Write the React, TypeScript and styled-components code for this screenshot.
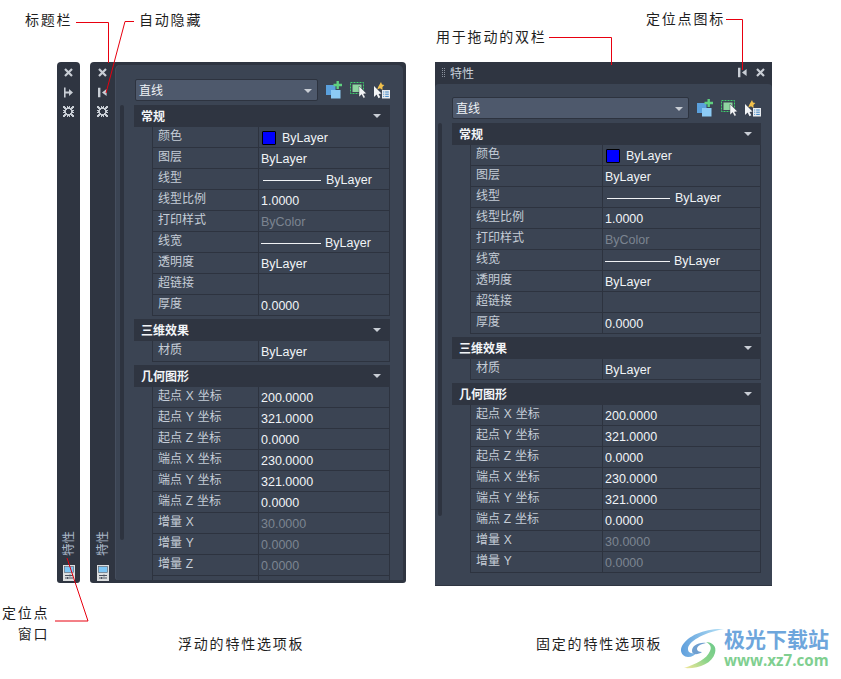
import React from "react";
import styled, { createGlobalStyle } from "styled-components";

const Global = createGlobalStyle`
  html, body { margin: 0; padding: 0; background: #fff; }
  body { font-family: "Liberation Sans", "Noto Sans CJK SC", sans-serif; }
`;

const CJK = `"Liberation Sans", "Noto Sans CJK SC", sans-serif`;

const Stage = styled.div`
  position: relative;
  width: 841px;
  height: 679px;
  overflow: hidden;
  box-sizing: border-box;
  padding: 62px 0 0 57px;
  display: flex;
  align-items: flex-start;
`;

const Dock = styled.div<{ $w: number; $mr: number }>`
  width: ${(p) => p.$w}px;
  height: 521px;
  margin-right: ${(p) => p.$mr}px;
  flex: none;
  background: #2f3541;
  border-radius: 4px 4px 3px 3px;
  display: flex;
  color: #cfd6df;
`;

const SideBar = styled.div<{ $w: number }>`
  width: ${(p) => p.$w}px;
  flex: none;
  display: flex;
  flex-direction: column;
  align-items: center;
  padding: 1px 0 2px;
  box-sizing: border-box;
`;

const SideIcon = styled.div`
  height: 19.5px;
  display: flex;
  align-items: center;
  justify-content: center;
`;

const SideLabel = styled.div`
  margin-top: auto;
  margin-bottom: 9px;
  writing-mode: vertical-rl;
  text-orientation: sideways;
  transform: rotate(180deg);
  font: 12.5px/14px ${CJK};
  color: #aab8c9;
`;

const Content = styled.div`
  flex: 1;
  margin: 3px 3px 3px 0;
  background: #3b4453;
  border-radius: 5px 5px 0 3px;
  box-shadow: inset 1px 0 0 #454e5e;
  padding: 14px 0 0;
  overflow: hidden;
  box-sizing: border-box;
`;

const ComboRow = styled.div<{ $pl: number }>`
  display: flex;
  align-items: center;
  padding-left: ${(p) => p.$pl}px;
  height: 22px;
`;

const Combo = styled.div<{ $w: number }>`
  width: ${(p) => p.$w}px;
  height: 22px;
  box-sizing: border-box;
  background: #4e596c;
  border: 1px solid #2d333f;
  border-radius: 2px;
  display: flex;
  align-items: center;
  justify-content: space-between;
  padding: 0 5px 1px 3px;
  font: 12px ${CJK};
  color: #eef2f6;
  flex: none;
`;

const DownArrow = styled.span`
  width: 0;
  height: 0;
  border-left: 4px solid transparent;
  border-right: 4px solid transparent;
  border-top: 4px solid #c9ced5;
  margin-top: 2px;
`;

const ToolIcons = styled.div`
  display: flex;
  align-items: center;
  gap: 6px;
  margin-left: 7px;
`;

const Body = styled.div<{ $pl: number; $gap: number }>`
  display: flex;
  align-items: flex-start;
  padding-left: ${(p) => p.$pl}px;
  gap: ${(p) => p.$gap}px;
  margin-top: 4px;
`;

const ScrollStrip = styled.div<{ $h: number }>`
  width: 4px;
  height: ${(p) => p.$h}px;
  background: #2d333f;
  border-radius: 2px;
  flex: none;
`;

const List = styled.div<{ $w: number }>`
  width: ${(p) => p.$w}px;
  flex: none;
`;

const SectionHead = styled.div`
  height: 22px;
  background: #2f3541;
  display: flex;
  align-items: center;
  justify-content: space-between;
  padding: 0 9px 2px 7px;
  box-sizing: border-box;
  font: bold 12px ${CJK};
  color: #f2f4f7;
`;

const SectionBlock = styled.div`
  margin-bottom: 3px;
`;

const Rows = styled.div`
  margin-left: 18px;
`;

const Row = styled.div<{ $label: number }>`
  display: grid;
  grid-template-columns: ${(p) => p.$label}px 1fr;
  height: 21px;
  box-sizing: border-box;
  border: solid #2d333f;
  border-width: 0 1px 1px 1px;
`;

const Label = styled.div`
  padding-left: 5px;
  font: 12px/19.5px ${CJK};
  word-spacing: 0.5px;
  color: #c5cdd7;
  white-space: nowrap;
`;

const Value = styled.div<{ $dim?: boolean }>`
  border-left: 1px solid #2d333f;
  padding: 1px 0 0 2px;
  font: 12.5px/20px ${CJK};
  color: ${(p) => (p.$dim ? "#7c8491" : "#f1f4f7")};
  display: flex;
  align-items: center;
  white-space: nowrap;
`;

const Swatch = styled.span`
  width: 12px;
  height: 12px;
  background: #0000ff;
  border: 1px solid #000;
  border-radius: 1px;
  margin: -1px 6px 0 1px;
  flex: none;
`;

const LineSample = styled.span<{ $w: number; $ml: number; $mr: number }>`
  width: ${(p) => p.$w}px;
  height: 1px;
  background: #f0f2f5;
  margin: 0 ${(p) => p.$mr}px 0 ${(p) => p.$ml}px;
  flex: none;
`;

const Docked = styled.div`
  width: 337px;
  height: 524px;
  flex: none;
  background: #2f3541;
  display: flex;
  flex-direction: column;
`;

const TitleBar = styled.div`
  height: 22px;
  display: flex;
  align-items: center;
  padding: 0 6px 2px 6px;
  box-sizing: border-box;
  font: 12px ${CJK};
  color: #c9d1db;
  flex: none;
`;

const Grip = styled.span`
  width: 4px;
  height: 9px;
  margin-right: 5px;
  background: repeating-conic-gradient(#8b929d 0 25%, transparent 0 100%) 0 0 / 2px 2px;
`;

const TitleIcons = styled.div`
  margin-left: auto;
  display: flex;
  align-items: center;
  gap: 7px;
`;

const DockedContent = styled.div`
  flex: 1;
  padding-top: 13px;
  overflow: hidden;
  background: #3b4453;
  border-radius: 4px 4px 0 0;
  border-bottom: 1px solid #2f3541;
`;

const Note = styled.div<{ $x: number; $y: number; $right?: boolean }>`
  position: absolute;
  left: ${(p) => p.$x}px;
  top: ${(p) => p.$y}px;
  font: 14px/21px ${CJK};
  color: #1f1f1f;
  letter-spacing: 1.8px;
  white-space: nowrap;
  text-align: ${(p) => (p.$right ? "right" : "left")};
`;

const Leaders = styled.svg`
  position: absolute;
  left: 0;
  top: 0;
  pointer-events: none;
`;

const Logo = styled.div`
  position: absolute;
  left: 680px;
  top: 627px;
  display: flex;
  align-items: flex-start;
`;

const LogoText = styled.div`
  display: flex;
  flex-direction: column;
`;

const LogoName = styled.div`
  font: bold 21px/25px ${CJK};
  color: #6ea6dc;
  white-space: nowrap;
`;

const LogoUrl = styled.div`
  font: bold 15.2px/17px "Open Sans", "Liberation Sans", sans-serif;
  color: #80cf90;
  white-space: nowrap;
`;

const CloseIcon = () => (
  <svg width="11" height="11" viewBox="0 0 11 11">
    <path d="M2 2l7 7M9 2l-7 7" stroke="#c9ced5" strokeWidth="2.2" fill="none" />
  </svg>
);

const PinIcon = () => (
  <svg width="11" height="11" viewBox="0 0 11 11">
    <path d="M1 .8h2.4v9.4H1zM5 5.5L9.6 2v7z" fill="#c9ced5" />
  </svg>
);

const UnpinIcon = () => (
  <svg width="11" height="11" viewBox="0 0 11 11">
    <path d="M1 .5h1.6v10H1zM2.6 4.5H6V2l4 3.5L6 9V6.5H2.6z" fill="#c9ced5" />
  </svg>
);

const gearBits = [
  "XX..X.X..XX",
  "XXX.XXX.XXX",
  ".XXXXXXXXX.",
  "..XX...XX..",
  "XXX.....XXX",
  ".XX.....XX.",
  "XXX.....XXX",
  "..XX...XX..",
  ".XXXXXXXXX.",
  "XXX.XXX.XXX",
  "XX..X.X..XX",
];

const GearIcon = () => (
  <svg width="11" height="11" viewBox="0 0 11 11" shapeRendering="crispEdges">
    {gearBits.flatMap((line, y) =>
      line.split("").map((c, x) =>
        c === "X" ? <rect key={`${x}-${y}`} x={x} y={y} width="1" height="1" fill="#c9ced5" /> : null,
      ),
    )}
  </svg>
);

const PaletteIcon = () => (
  <svg width="12" height="16" viewBox="0 0 12 16">
    <rect width="12" height="16" fill="#dcdedf" />
    <rect x="1.5" y="1.5" width="9" height="6" fill="#7cc6f6" stroke="#555c68" strokeWidth="0.6" />
    <path d="M2 10.5h8M2 13h8" stroke="#4b5260" strokeWidth="1" />
    <path d="M7 9.5v2M4.5 12v2" stroke="#4b5260" strokeWidth="1" />
  </svg>
);

const QuickAddIcon = () => (
  <svg width="18" height="18" viewBox="0 0 18 18">
    <rect x="1" y="4" width="9.5" height="10" fill="#5aa0dc" />
    <rect x="6" y="9" width="9.5" height="8.5" fill="#8ccbf5" />
    <path d="M8.5 4h8.5M12.7 0v8" stroke="#5fd07f" strokeWidth="2.4" />
  </svg>
);

const SelectIcon = () => (
  <svg width="18" height="18" viewBox="0 0 18 18">
    <rect x="1.5" y="1.5" width="13" height="11" fill="none" stroke="#3fcf6b" strokeDasharray="2 1" />
    <rect x="3.5" y="3.5" width="9" height="7.5" fill="#8fd4a0" />
    <path d="M10 5v11l2.6-2.4 1.9 3.6 1.8-.9-1.8-3.4 3-.3z" fill="#f2f4f6" stroke="#2b303a" strokeWidth="0.4" />
  </svg>
);

const PickIcon = () => (
  <svg width="18" height="18" viewBox="0 0 18 18">
    <path d="M1 5v11l2.6-2.4 1.9 3.6 1.8-.9-1.8-3.4 3-.3z" fill="#f2f4f6" />
    <path d="M8 1l1 2.6 2.4.4-2 2L9.6 9 7 7.2 4.2 8.4 5.4 5.5z" fill="#f2c14c" />
    <rect x="9" y="9" width="8" height="8.5" fill="#e8ecf0" />
    <path d="M10.2 11h1M10.2 13.2h1M10.2 15.4h1M12.2 11h3.6M12.2 13.2h3.6M12.2 15.4h3.6" stroke="#3b84c4" strokeWidth="1" />
  </svg>
);

type RowData = {
  k: string;
  v?: string;
  dim?: boolean;
  kind?: "color" | "line" | "weight";
};

const general: RowData[] = [
  { k: "颜色", v: "ByLayer", kind: "color" },
  { k: "图层", v: "ByLayer" },
  { k: "线型", v: "ByLayer", kind: "line" },
  { k: "线型比例", v: "1.0000" },
  { k: "打印样式", v: "ByColor", dim: true },
  { k: "线宽", v: "ByLayer", kind: "weight" },
  { k: "透明度", v: "ByLayer" },
  { k: "超链接" },
  { k: "厚度", v: "0.0000" },
];
const material: RowData[] = [{ k: "材质", v: "ByLayer" }];
const geometry: RowData[] = [
  { k: "起点 X 坐标", v: "200.0000" },
  { k: "起点 Y 坐标", v: "321.0000" },
  { k: "起点 Z 坐标", v: "0.0000" },
  { k: "端点 X 坐标", v: "230.0000" },
  { k: "端点 Y 坐标", v: "321.0000" },
  { k: "端点 Z 坐标", v: "0.0000" },
  { k: "增量 X", v: "30.0000", dim: true },
  { k: "增量 Y", v: "0.0000", dim: true },
];

type SheetProps = {
  labelW: number;
  lineW: number;
  weightW: number;
  extra: RowData[];
};

const PropRow = ({ r, labelW, lineW, weightW }: { r: RowData; labelW: number; lineW: number; weightW: number }) => (
  <Row $label={labelW}>
    <Label>{r.k}</Label>
    <Value $dim={r.dim}>
      {r.kind === "color" && <Swatch />}
      {r.kind === "line" && <LineSample $w={lineW} $ml={2} $mr={5} />}
      {r.kind === "weight" && <LineSample $w={weightW} $ml={0} $mr={4} />}
      {r.v}
    </Value>
  </Row>
);

const Sheet = ({ labelW, lineW, weightW, extra }: SheetProps) => {
  const groups: [string, RowData[]][] = [
    ["常规", general],
    ["三维效果", material],
    ["几何图形", [...geometry, ...extra]],
  ];
  return (
    <>
      {groups.map(([title, rows]) => (
        <SectionBlock key={title}>
          <SectionHead>
            {title}
            <DownArrow />
          </SectionHead>
          <Rows>
            {rows.map((r) => (
              <PropRow key={r.k} r={r} labelW={labelW} lineW={lineW} weightW={weightW} />
            ))}
          </Rows>
        </SectionBlock>
      ))}
    </>
  );
};

const Tools = () => (
  <ToolIcons>
    <QuickAddIcon />
    <SelectIcon />
    <PickIcon />
  </ToolIcons>
);

export default function App() {
  return (
    <Stage>
      <Global />
      <Dock $w={23} $mr={10}>
        <SideBar $w={23}>
          <SideIcon><CloseIcon /></SideIcon>
          <SideIcon><UnpinIcon /></SideIcon>
          <SideIcon><GearIcon /></SideIcon>
          <SideLabel>特性</SideLabel>
          <PaletteIcon />
        </SideBar>
      </Dock>

      <Dock $w={316} $mr={29}>
        <SideBar $w={25}>
          <SideIcon><CloseIcon /></SideIcon>
          <SideIcon><PinIcon /></SideIcon>
          <SideIcon><GearIcon /></SideIcon>
          <SideLabel>特性</SideLabel>
          <PaletteIcon />
        </SideBar>
        <Content>
          <ComboRow $pl={20}>
            <Combo $w={183}>
              直线
              <DownArrow />
            </Combo>
            <Tools />
          </ComboRow>
          <Body $pl={5} $gap={10}>
            <ScrollStrip $h={435} />
            <List $w={256}>
              <Sheet labelW={105} lineW={58} weightW={60} extra={[{ k: "增量 Z", v: "0.0000", dim: true }, { k: " " }]} />
            </List>
          </Body>
        </Content>
      </Dock>

      <Docked>
        <TitleBar>
          <Grip />
          特性
          <TitleIcons>
            <PinIcon />
            <CloseIcon />
          </TitleIcons>
        </TitleBar>
        <DockedContent>
          <ComboRow $pl={17}>
            <Combo $w={237}>
              直线
              <DownArrow />
            </Combo>
            <Tools />
          </ComboRow>
          <Body $pl={3} $gap={10}>
            <ScrollStrip $h={393} />
            <List $w={309}>
              <Sheet labelW={131} lineW={63} weightW={65} extra={[]} />
            </List>
          </Body>
        </DockedContent>
      </Docked>

      <Leaders width="841" height="679" viewBox="0 0 841 679" fill="none" stroke="#e8000f" strokeWidth="1">
        <path d="M76 22.5h32.5V63" />
        <path d="M134 21.5h-9L106 93" />
        <path d="M55 621h33L67 558" />
        <path d="M549 37.5h62.5V65" />
        <path d="M726 19.5h16.5V70" />
      </Leaders>

      <Note $x={25} $y={10}>标题栏</Note>
      <Note $x={139} $y={10}>自动隐藏</Note>
      <Note $x={2} $y={603} $right>
        定位点<br />窗口
      </Note>
      <Note $x={178} $y={634}>浮动的特性选项板</Note>
      <Note $x={436} $y={27}>用于拖动的双栏</Note>
      <Note $x={646} $y={9}>定位点图标</Note>
      <Note $x={536} $y={634}>固定的特性选项板</Note>

      <Logo>
        <svg width="44" height="42" viewBox="0 0 44 42">
          <defs>
            <linearGradient id="lgA" x1="0" y1="0" x2="1" y2="0">
              <stop offset="0" stopColor="#5f9fdc" />
              <stop offset="1" stopColor="#b9e4f7" />
            </linearGradient>
            <linearGradient id="lgB" x1="0" y1="1" x2="1" y2="0">
              <stop offset="0" stopColor="#f5e79a" />
              <stop offset="0.5" stopColor="#8bd48a" />
              <stop offset="1" stopColor="#6cc98a" />
            </linearGradient>
          </defs>
          <path d="M44 2C26 1 8 8 2 19c-3 6 1 11 6 11 4 0 7-2 8-4-4 1-8 0-8-4C8 15 22 6 44 2z" fill="url(#lgA)" />
          <path d="M12 24c0-5 6-9 14-8-5 1-9 3-9 6 0 2 2 3 5 3-4 3-10 3-10-1z" fill="#6f9fd0" />
          <path d="M4 41c14 1 28-4 31-15 2-7-3-11-9-11 4 2 6 5 4 9C27 32 16 37 4 41z" fill="url(#lgB)" />
        </svg>
        <LogoText>
          <LogoName>极光下载站</LogoName>
          <LogoUrl>www.xz7.com</LogoUrl>
        </LogoText>
      </Logo>
    </Stage>
  );
}
